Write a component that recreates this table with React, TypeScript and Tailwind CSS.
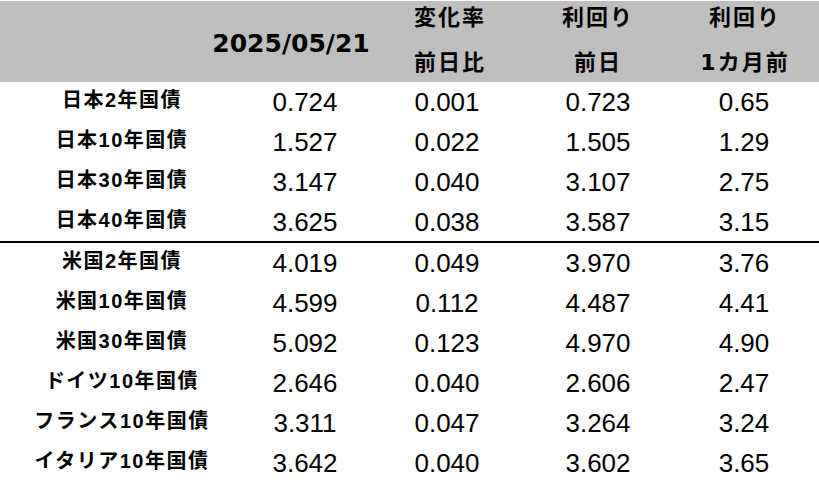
type Row = {
  name: string;
  today: string;
  change: string;
  prev: string;
  month: string;
};

const japan: Row[] = [
  { name: "日本2年国債", today: "0.724", change: "0.001", prev: "0.723", month: "0.65" },
  { name: "日本10年国債", today: "1.527", change: "0.022", prev: "1.505", month: "1.29" },
  { name: "日本30年国債", today: "3.147", change: "0.040", prev: "3.107", month: "2.75" },
  { name: "日本40年国債", today: "3.625", change: "0.038", prev: "3.587", month: "3.15" },
];

const foreign: Row[] = [
  { name: "米国2年国債", today: "4.019", change: "0.049", prev: "3.970", month: "3.76" },
  { name: "米国10年国債", today: "4.599", change: "0.112", prev: "4.487", month: "4.41" },
  { name: "米国30年国債", today: "5.092", change: "0.123", prev: "4.970", month: "4.90" },
  { name: "ドイツ10年国債", today: "2.646", change: "0.040", prev: "2.606", month: "2.47" },
  { name: "フランス10年国債", today: "3.311", change: "0.047", prev: "3.264", month: "3.24" },
  { name: "イタリア10年国債", today: "3.642", change: "0.040", prev: "3.602", month: "3.65" },
];

const cols = "grid grid-cols-[242px_124px_166px_130px_1fr]";
const head = "font-['DejaVu_Sans','Noto_Sans_CJK_JP',sans-serif] font-bold text-[22px] tracking-[2px] text-black";
const label = "font-['Liberation_Sans','Noto_Sans_CJK_JP',sans-serif] font-bold text-[20px] tracking-[1.5px] text-black";
const num = "font-['Liberation_Sans',Arial,sans-serif] text-[26px] text-black";

const DataRow = ({ row }: { row: Row }) => (
  <div className={`${cols} h-10 items-center`}>
    <div className={`${label} flex justify-center pb-1 whitespace-nowrap`}>{row.name}</div>
    <div className={`${num} flex justify-center`}>{row.today}</div>
    <div className={`${num} flex justify-center pr-[6px]`}>{row.change}</div>
    <div className={`${num} flex justify-center`}>{row.prev}</div>
    <div className={`${num} flex justify-center pl-[6px]`}>{row.month}</div>
  </div>
);

export default function App() {
  return (
    <div className="w-[819px] h-[485px] bg-white pt-px pl-px overflow-hidden">
      {/* header */}
      <div className={`${cols} h-[81px] bg-[#bfbfbf] -ml-px pl-px`}>
        <div />
        <div className="flex items-center justify-center pr-[28px] pt-[4px]">
          <span className="font-['DejaVu_Sans',sans-serif] font-bold text-[25px] text-black whitespace-nowrap">
            2025/05/21
          </span>
        </div>
        <div className={`${head} flex flex-col items-center justify-center gap-[12px] pb-[4px]`}>
          <span>変化率</span>
          <span>前日比</span>
        </div>
        <div className={`${head} flex flex-col items-center justify-center gap-[12px] pb-[4px]`}>
          <span>利回り</span>
          <span>前日</span>
        </div>
        <div className={`${head} flex flex-col items-center justify-center gap-[12px] pb-[4px] pl-[8px]`}>
          <span>利回り</span>
          <span>1カ月前</span>
        </div>
      </div>

      {japan.map((r) => (
        <DataRow key={r.name} row={r} />
      ))}

      <div className="h-[2px] bg-black -ml-px -mt-px" />

      {foreign.map((r) => (
        <DataRow key={r.name} row={r} />
      ))}
    </div>
  );
}
